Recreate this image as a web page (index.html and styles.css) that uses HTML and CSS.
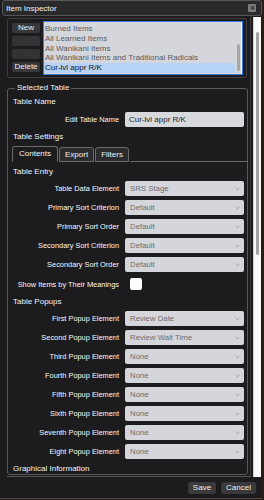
FILE: index.html
```html
<!DOCTYPE html>
<html lang="en">
<head>
    <meta charset="UTF-8">
    <meta name="viewport" content="width=device-width, initial-scale=1.0">
    <title>Item Inspector</title>
    <link rel="stylesheet" href="styles.css">
</head>
<body>
    <div class="dialog">
        <div class="titlebar">
            <span class="title">Item Inspector</span>
            <span class="close">&#x2716;</span>
        </div>

        <div class="main">
            <div class="scroll">
                <div class="lists">
                    <div class="list-buttons">
                        <div class="btn">New</div>
                        <div class="btn off">&uarr;</div>
                        <div class="btn off">&darr;</div>
                        <div class="btn">Delete</div>
                    </div>
                    <div class="listbox">
                        <div class="items">
                            <div class="item">Burned Items</div>
                            <div class="item">All Learned Items</div>
                            <div class="item">All Wanikani Items</div>
                            <div class="item">All Wanikani Items and Traditional Radicals</div>
                            <div class="item active">Cur-lvl appr R/K</div>
                        </div>
                        <div class="list-track"><div class="list-thumb"></div></div>
                    </div>
                </div>

                <fieldset class="selected">
                    <legend>Selected Table</legend>
                    <div class="form">
                        <div class="heading">Table Name</div>
                        <label class="label gap">Edit Table Name</label>
                        <div class="input gap">Cur-lvl appr R/K</div>

                        <div class="heading">Table Settings</div>
                        <div class="tabs">
                            <div class="tab active">Contents</div>
                            <div class="tab">Export</div>
                            <div class="tab">Filters</div>
                            <div class="tab-rest"></div>
                        </div>

                        <div class="heading">Table Entry</div>
                        <label class="label">Table Data Element</label>
                        <div class="select">SRS Stage<svg viewBox="0 0 6 4"><path d="M0.5 0.5 L3 3 L5.5 0.5"/></svg></div>
                        <label class="label">Primary Sort Criterion</label>
                        <div class="select">Default<svg viewBox="0 0 6 4"><path d="M0.5 0.5 L3 3 L5.5 0.5"/></svg></div>
                        <label class="label">Primary Sort Order</label>
                        <div class="select">Default<svg viewBox="0 0 6 4"><path d="M0.5 0.5 L3 3 L5.5 0.5"/></svg></div>
                        <label class="label">Secondary Sort Criterion</label>
                        <div class="select">Default<svg viewBox="0 0 6 4"><path d="M0.5 0.5 L3 3 L5.5 0.5"/></svg></div>
                        <label class="label">Secondary Sort Order</label>
                        <div class="select">Default<svg viewBox="0 0 6 4"><path d="M0.5 0.5 L3 3 L5.5 0.5"/></svg></div>
                        <label class="label">Show Items by Their Meanings</label>
                        <div class="check-cell"><span class="checkbox"></span></div>

                        <div class="heading">Table Popups</div>
                        <label class="label">First Popup Element</label>
                        <div class="select">Review Date<svg viewBox="0 0 6 4"><path d="M0.5 0.5 L3 3 L5.5 0.5"/></svg></div>
                        <label class="label">Second Popup Element</label>
                        <div class="select">Review Wait Time<svg viewBox="0 0 6 4"><path d="M0.5 0.5 L3 3 L5.5 0.5"/></svg></div>
                        <label class="label">Third Popup Element</label>
                        <div class="select">None<svg viewBox="0 0 6 4"><path d="M0.5 0.5 L3 3 L5.5 0.5"/></svg></div>
                        <label class="label">Fourth Popup Element</label>
                        <div class="select">None<svg viewBox="0 0 6 4"><path d="M0.5 0.5 L3 3 L5.5 0.5"/></svg></div>
                        <label class="label">Fifth Popup Element</label>
                        <div class="select">None<svg viewBox="0 0 6 4"><path d="M0.5 0.5 L3 3 L5.5 0.5"/></svg></div>
                        <label class="label">Sixth Popup Element</label>
                        <div class="select">None<svg viewBox="0 0 6 4"><path d="M0.5 0.5 L3 3 L5.5 0.5"/></svg></div>
                        <label class="label">Seventh Popup Element</label>
                        <div class="select">None<svg viewBox="0 0 6 4"><path d="M0.5 0.5 L3 3 L5.5 0.5"/></svg></div>
                        <label class="label">Eight Popup Element</label>
                        <div class="select">None<svg viewBox="0 0 6 4"><path d="M0.5 0.5 L3 3 L5.5 0.5"/></svg></div>

                        <div class="heading">Graphical Information</div>
                    </div>
                </fieldset>
            </div>
            <div class="track"><div class="thumb"></div></div>
        </div>

        <div class="footer">
            <div class="btn big">Save</div>
            <div class="btn big">Cancel</div>
        </div>
    </div>
</body>
</html>
```

FILE: styles.css
```css
html, body {
    margin: 0;
    background-color: #2a1e16;
}
body {
    font-family: 'Liberation Sans', Arial, sans-serif;
    color: #f4f4f4;
}
.dialog {
    width: 262px;
    height: 498px;
    background-color: #1c1c1e;
    border-bottom: 1px solid #4a4a4c;
    display: flex;
    flex-direction: column;
}

/* Заголовок окна */
.titlebar {
    height: 14px;
    margin-left: 2px;
    border: 1px solid #555;
    border-radius: 3px;
    background-color: #2a2a2c;
    display: flex;
    align-items: center;
    justify-content: space-between;
    padding: 0 5px 0 3px;
}
.title {
    font-size: 8px;
}
.close {
    width: 8px;
    height: 8px;
    background-color: #7c7c7e;
    color: #3a3a3a;
    font-size: 6px;
    line-height: 8px;
    text-align: center;
    border-radius: 1px;
}

.main {
    flex: 1;
    display: flex;
    min-height: 0;
}
.scroll {
    width: 243px;
    margin-left: 7px;
    border-right: 1px solid #3a3a3c;
    border-bottom: 1px solid #555;
    overflow: hidden;
}
.track {
    width: 7px;
    margin: 1px 0 0 2px;
    background-color: #fafafa;
    border-left: 1px solid #d0d0d0;
}
.thumb {
    width: 3px;
    height: 223px;
    margin: 15px 0 0 2px;
    border-radius: 2px;
    background-color: #a4a4a4;
}

/* Список таблиц */
.lists {
    width: 234px;
    height: 55px;
    margin-top: 2px;
    border: 1px solid #3e3e40;
    border-radius: 2px;
    padding: 2px 0 1px 4px;
    display: flex;
    gap: 3px;
}
.list-buttons {
    width: 28px;
    padding-top: 2px;
    display: flex;
    flex-direction: column;
    gap: 3px;
}
.btn {
    height: 10px;
    line-height: 10px;
    background-color: #38383a;
    border-radius: 2px;
    font-size: 8px;
    text-align: center;
    color: #f0f0f0;
}
.btn.off {
    color: #4c4c4e;
    background-color: #333335;
}
.listbox {
    width: 198px;
    height: 52px;
    border: 1px solid #3b78e0;
    background-color: #d4d6dc;
    display: flex;
    overflow: hidden;
}
.items {
    flex: 1;
    padding-top: 2px;
}
.item {
    font-size: 8px;
    line-height: 9.75px;
    padding-left: 1px;
    color: #5a5a5c;
    white-space: nowrap;
}
.item.active {
    background-color: #b6d3f7;
    color: #101018;
}
.list-track {
    width: 6px;
    border-right: 1px solid #f4f4f6;
}
.list-thumb {
    width: 3px;
    height: 27px;
    margin: 22px 0 0 2px;
    border-radius: 2px;
    background-color: #a6a6a8;
}

/* Выбранная таблица */
.selected {
    width: 231px;
    margin: 5px 0 0 0;
    padding: 3px 3px 0 5px;
    border: 1px solid #5a5a5c;
    border-radius: 3px;
}
.selected legend {
    font-size: 8px;
    line-height: 10px;
    padding: 0 2px;
    margin-left: 2px;
}
.form {
    display: grid;
    grid-template-columns: 1fr 119px;
    column-gap: 6px;
    row-gap: 4px;
    align-items: center;
}
.heading {
    grid-column: 1 / -1;
    font-size: 8px;
    line-height: 10px;
    margin-top: 1px;
}
.label {
    font-size: 7.4px;
    text-align: right;
    white-space: nowrap;
    color: #fafafa;
}
.gap {
    margin-top: 1px;
}
.input {
    height: 15px;
    line-height: 15px;
    background-color: #d8d9dd;
    border-radius: 2px;
    color: #1e1e20;
    font-size: 8px;
    padding-left: 4px;
}
.select {
    height: 15px;
    line-height: 15px;
    background-color: #d5d6db;
    border-radius: 2px;
    color: #6c6c6e;
    font-size: 7.8px;
    padding: 0 4px 0 5px;
    display: flex;
    justify-content: space-between;
    align-items: center;
}
.select svg {
    width: 5px;
    height: 4px;
    fill: none;
    stroke: #8a8a8c;
    stroke-width: 0.8;
}
.check-cell {
    height: 16px;
    display: flex;
    align-items: center;
}
.checkbox {
    width: 12px;
    height: 12px;
    margin-left: 5px;
    background-color: #fdfdfd;
    border-radius: 2px;
}

/* Вкладки */
.tabs {
    grid-column: 1 / -1;
    display: flex;
    align-items: flex-end;
    margin: 1px -4px 0 -1px;
    height: 15px;
}
.tab {
    height: 13px;
    line-height: 13px;
    font-size: 8px;
    padding: 0 5px;
    margin-right: 1px;
    border: 1px solid #6a6a6c;
    border-radius: 3px 3px 0 0;
    background-color: #2c2c2e;
}
.tab.active {
    height: 14px;
    line-height: 14px;
    padding: 0 6px;
    border-bottom-color: #1c1c1e;
    background-color: #1c1c1e;
}
.tab-rest {
    flex: 1;
    border-bottom: 1px solid #6a6a6c;
}

/* Кнопки внизу */
.footer {
    height: 21px;
    display: flex;
    justify-content: flex-end;
    align-items: center;
    gap: 5px;
    padding-right: 6px;
}
.btn.big {
    height: 12px;
    line-height: 12px;
    padding: 0 5px;
    border-radius: 3px;
    background-color: #3a3a3c;
}
```
